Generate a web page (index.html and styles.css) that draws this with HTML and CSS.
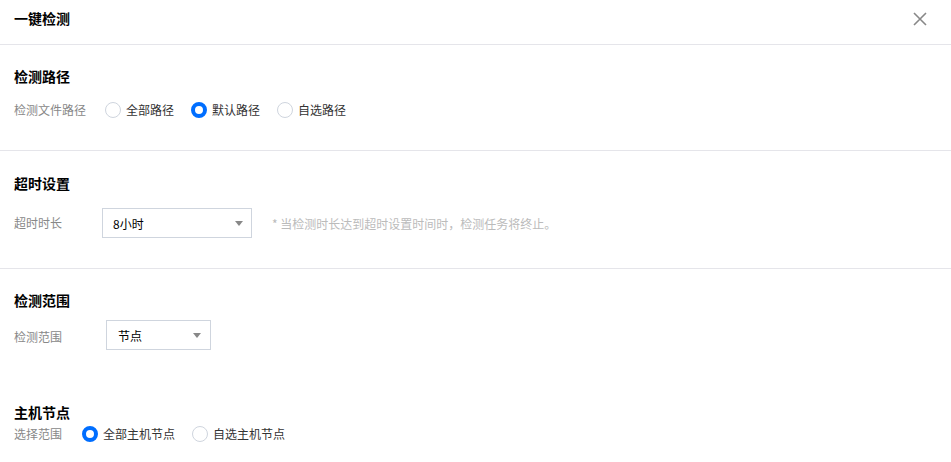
FILE: index.html
```html
<!DOCTYPE html>
<html lang="zh">
<head>
<meta charset="utf-8">
<link rel="stylesheet" href="styles.css">
</head>
<body>
<div class="dialog">
  <div class="header">
    <div class="title">一键检测</div>
    <svg class="close" width="14" height="14" viewBox="0 0 14 14"><path d="M1 1L13 13M13 1L1 13" stroke="#888" stroke-width="1.6" fill="none"/></svg>
  </div>

  <div class="section s1">
    <div class="sec-title">检测路径</div>
    <div class="row">
      <div class="label w86">检测文件路径</div>
      <div class="radios pad19">
        <label class="radio"><span class="dot"></span><span>全部路径</span></label>
        <label class="radio"><span class="dot on"></span><span>默认路径</span></label>
        <label class="radio"><span class="dot"></span><span>自选路径</span></label>
      </div>
    </div>
  </div>

  <div class="section s2">
    <div class="sec-title">超时设置</div>
    <div class="row">
      <div class="label w62">超时时长</div>
      <div class="select sel1 ml40"><span>8小时</span><i class="caret"></i></div>
      <div class="hint">* 当检测时长达到超时设置时间时，检测任务将终止。</div>
    </div>
  </div>

  <div class="section s3">
    <div class="sec-title">检测范围</div>
    <div class="row">
      <div class="label w62 lab3">检测范围</div>
      <div class="select sel2 ml44"><span>节点</span><i class="caret"></i></div>
    </div>
  </div>

  <div class="section s4">
    <div class="sec-title">主机节点</div>
    <div class="row">
      <div class="label w62">选择范围</div>
      <div class="radios pad20">
        <label class="radio"><span class="dot on"></span><span>全部主机节点</span></label>
        <label class="radio"><span class="dot"></span><span>自选主机节点</span></label>
      </div>
    </div>
  </div>
</div>
</body>
</html>
```
FILE: styles.css
```css
* { box-sizing: border-box; }
html, body { margin: 0; padding: 0; background: #fff; }
body {
  font-family: "Noto Sans CJK SC", "Liberation Sans", sans-serif;
  font-size: 12px;
  color: #333;
}
.dialog { width: 951px; }
.header {
  height: 45px;
  border-bottom: 1px solid #e5e5ea;
  display: flex;
  align-items: flex-start;
  justify-content: space-between;
  padding: 8px 24px 0 14px;
}
.title {
  font-size: 14px;
  font-weight: 700;
  line-height: 20px;
  color: #000;
}
.close { margin-top: 4px; }
.section {
  padding: 0 14px;
}
.sec-title {
  font-size: 14px;
  font-weight: 700;
  line-height: 20px;
  color: #000;
}
.row {
  display: flex;
  align-items: center;
}
.label { color: #888; line-height: 24px; flex: none; }
.w86 { width: 72px; }
.w62 { width: 48px; }
.pad19 { margin-left: 19px; }
.pad20 { margin-left: 20px; }
.ml40 { margin-left: 40px; }
.ml44 { margin-left: 44px; }
.s1 { padding-top: 21px; padding-bottom: 28px; border-bottom: 1px solid #e5e5ea; }
.s1 .row { margin-top: 12px; height: 24px; }
.s2 { padding-top: 22px; padding-bottom: 30px; border-bottom: 1px solid #e5e5ea; }
.s2 .row { margin-top: 15px; }
.s3 { padding-top: 21px; }
.s3 .row { margin-top: 10px; }
.lab3 { margin-top: 4px; }
.s4 { padding-top: 52px; }
.s4 .row { margin-top: 0; height: 24px; }
.radios { display: flex; align-items: center; }
.radio {
  display: flex;
  align-items: center;
  margin-right: 17px;
  line-height: 24px;
  color: #333;
}
.dot {
  width: 16px;
  height: 16px;
  border-radius: 50%;
  border: 1px solid #cfd5de;
  margin-right: 5px;
  background: #fff;
  flex: none;
}
.dot.on {
  border: 4.5px solid #006eff;
}
.select {
  height: 30px;
  border: 1px solid #cfd5de;
  display: flex;
  align-items: center;
  justify-content: space-between;
  color: #000;
  flex: none;
}
.sel1 { width: 150px; padding: 0 8px 0 10px; }
.sel2 { width: 105px; padding: 0 9px 0 11px; }
.caret {
  width: 0;
  height: 0;
  border-left: 4.5px solid transparent;
  border-right: 4.5px solid transparent;
  border-top: 5px solid #888;
}
.hint { color: #bbb; margin-left: 20px; }
```
